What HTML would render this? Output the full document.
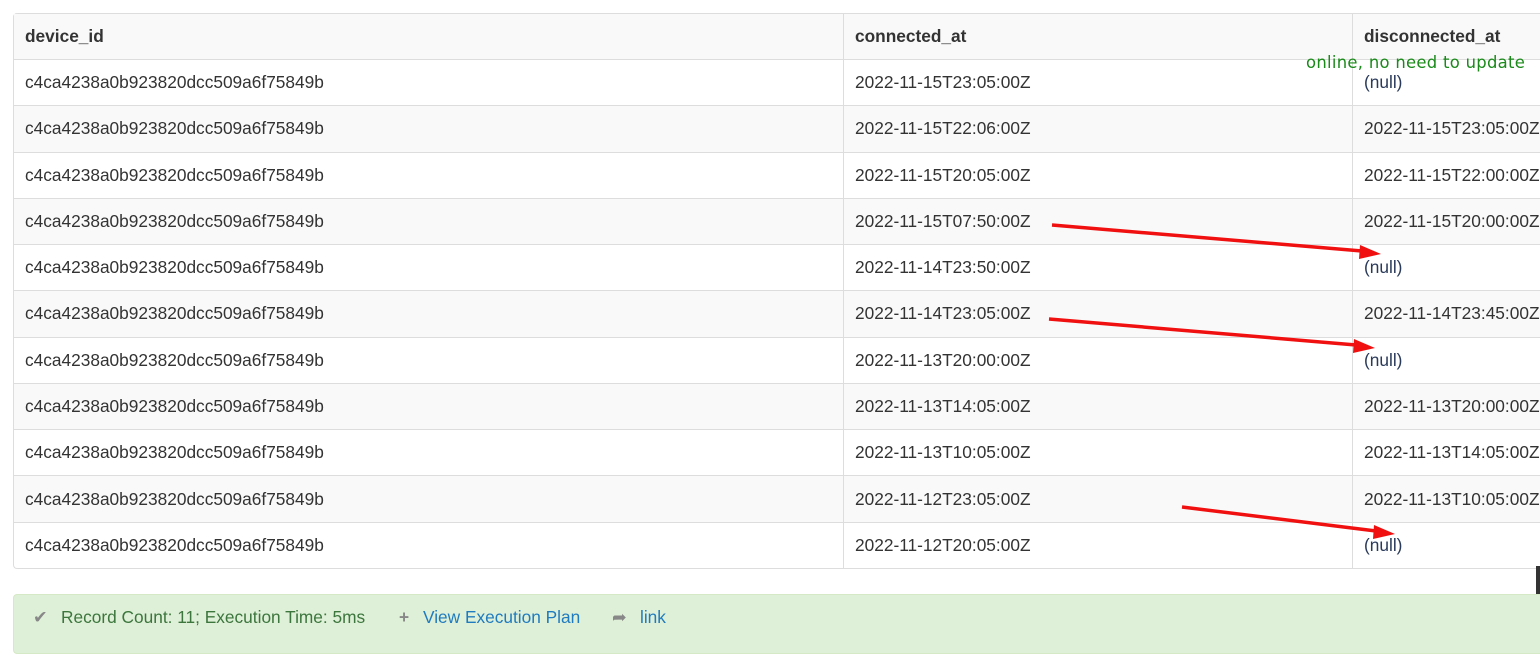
<!DOCTYPE html>
<html><head><style>
body{margin:0;width:1540px;height:639px;overflow:hidden;background:#fff;font-family:"Liberation Sans",Arial,sans-serif;font-size:17.3px;color:#333;position:relative}
table{position:absolute;left:13px;top:13px;border-collapse:separate;border-spacing:0;border:1px solid #ddd;border-right:none;border-radius:4px 0 0 4px;width:1540px}
td,th{height:46.27px;padding:0 11px;border-top:1px solid #ddd;text-align:left;white-space:nowrap;box-sizing:border-box}
th{border-top:none;height:45px;font-weight:bold;background:#f9f9f9}
td+td,th+th{border-left:1px solid #ddd}
tr.g td{background:#f9f9f9}
.n{color:#2a3a5a}
.foot{position:absolute;left:13px;top:594px;width:1540px;height:60px;background:#dff0d8;border:1px solid #d6e9c6;border-radius:4px;box-sizing:border-box}
.foot span{position:absolute;top:12px}
.note{position:absolute;left:1306px;top:53px;color:#1a8a1a;font-family:"DejaVu Sans",sans-serif;font-size:16.4px;letter-spacing:0.3px}
</style></head><body>
<table>
<tr><th style="width:829px">device_id</th><th style="width:509px">connected_at</th><th>disconnected_at</th></tr>
<tr><td>c4ca4238a0b923820dcc509a6f75849b</td><td>2022-11-15T23:05:00Z</td><td class="n">(null)</td></tr>
<tr class="g"><td>c4ca4238a0b923820dcc509a6f75849b</td><td>2022-11-15T22:06:00Z</td><td>2022-11-15T23:05:00Z</td></tr>
<tr><td>c4ca4238a0b923820dcc509a6f75849b</td><td>2022-11-15T20:05:00Z</td><td>2022-11-15T22:00:00Z</td></tr>
<tr class="g"><td>c4ca4238a0b923820dcc509a6f75849b</td><td>2022-11-15T07:50:00Z</td><td>2022-11-15T20:00:00Z</td></tr>
<tr><td>c4ca4238a0b923820dcc509a6f75849b</td><td>2022-11-14T23:50:00Z</td><td class="n">(null)</td></tr>
<tr class="g"><td>c4ca4238a0b923820dcc509a6f75849b</td><td>2022-11-14T23:05:00Z</td><td>2022-11-14T23:45:00Z</td></tr>
<tr><td>c4ca4238a0b923820dcc509a6f75849b</td><td>2022-11-13T20:00:00Z</td><td class="n">(null)</td></tr>
<tr class="g"><td>c4ca4238a0b923820dcc509a6f75849b</td><td>2022-11-13T14:05:00Z</td><td>2022-11-13T20:00:00Z</td></tr>
<tr><td>c4ca4238a0b923820dcc509a6f75849b</td><td>2022-11-13T10:05:00Z</td><td>2022-11-13T14:05:00Z</td></tr>
<tr class="g"><td>c4ca4238a0b923820dcc509a6f75849b</td><td>2022-11-12T23:05:00Z</td><td>2022-11-13T10:05:00Z</td></tr>
<tr><td>c4ca4238a0b923820dcc509a6f75849b</td><td>2022-11-12T20:05:00Z</td><td class="n">(null)</td></tr>
</table>
<div class="note">online, no need to update</div>
<svg style="position:absolute;left:0;top:0" width="1540" height="639">
<g stroke="#f01010" stroke-width="3.5" fill="#f01010">
<line x1="1052" y1="225" x2="1362" y2="251"/><polygon points="1381,254 1360,245 1359,259" stroke="none"/>
<line x1="1049" y1="319" x2="1356" y2="345"/><polygon points="1375,348 1354,339 1353,353" stroke="none"/>
<line x1="1182" y1="507" x2="1376" y2="531"/><polygon points="1395,534 1374,525 1373,539" stroke="none"/>
</g>
<rect x="1536" y="566" width="4" height="34" fill="#333"/>
</svg>
<div class="foot">
<span style="left:19px;color:#888">✔</span>
<span style="left:47px;color:#3c763d">Record Count: 11; Execution Time: 5ms</span>
<span style="left:385px;color:#888;font-weight:bold">+</span>
<span style="left:409px;color:#1f7bbf">View Execution Plan</span>
<span style="left:598px;color:#888">➦</span>
<span style="left:626px;color:#1f7bbf">link</span>
</div>
</body></html>
